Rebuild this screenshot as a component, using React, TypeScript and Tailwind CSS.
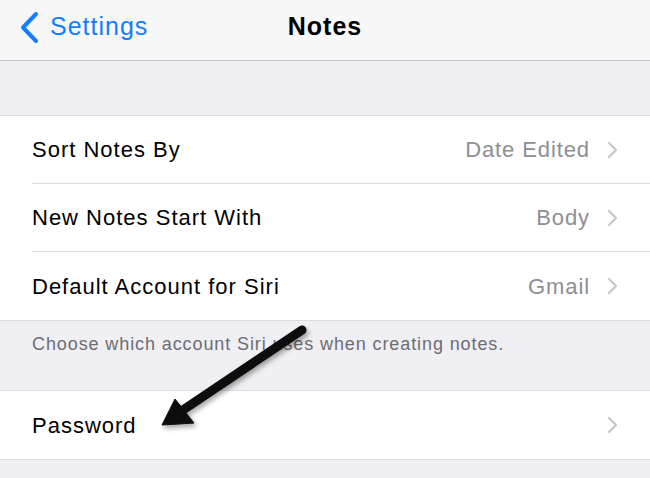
import React from "react"

const font = { fontFamily: '"Liberation Sans", Arial, sans-serif' }

function Chevron() {
    return (
        <svg width="11" height="18" viewBox="0 0 11 18" className="shrink-0">
            <path d="M2 2 L9 9 L2 16" fill="none" stroke="#c7c7cc" strokeWidth="2.2" strokeLinecap="round" strokeLinejoin="round" />
        </svg>
    )
}

function Row({ label, value, last }: { label: string; value?: string; last?: boolean }) {
    return (
        <div className="h-[68px] pl-8 flex items-stretch">
            <div className={`flex-1 flex items-center pr-8 ${last ? "" : "border-b border-[#dcdce0]"}`}>
                <span className="flex-1 text-[22px] tracking-[1px] text-black">{label}</span>
                {value && <span className="text-[22px] tracking-[0.9px] text-[#8e8e93] mr-[17px]">{value}</span>}
                <Chevron />
            </div>
        </div>
    )
}

export default function App() {
    return (
        <div className="relative w-[650px] h-[478px] overflow-hidden bg-[#efeff4]" style={font}>
            <div className="h-[61px] bg-[#f7f7f8] border-b border-[#c8c7cc] flex items-center relative pb-[6px]">
                <div className="flex items-center pl-[19px] gap-[10px]">
                    <svg width="21" height="33" viewBox="0 0 21 33">
                        <path d="M17 3 L4 16.5 L17 30" fill="none" stroke="#147efb" strokeWidth="4" strokeLinecap="round" strokeLinejoin="round" />
                    </svg>
                    <span className="text-[25px] tracking-[1px] text-[#147efb]">Settings</span>
                </div>
                <span className="absolute left-1/2 top-[8px] -translate-x-1/2 text-[25px] tracking-[1px] font-bold text-black">Notes</span>
            </div>
            <div className="h-[54px]" />
            <div className="bg-white border-y border-[#dcdce0]">
                <Row label="Sort Notes By" value="Date Edited" />
                <Row label="New Notes Start With" value="Body" />
                <Row label="Default Account for Siri" value="Gmail" last />
            </div>
            <div className="h-[69px] pl-8 pt-[10px] text-[18px] tracking-[0.9px] text-[#6d6d72]">
                Choose which account Siri uses when creating notes.
            </div>
            <div className="bg-white border-y border-[#dcdce0]">
                <Row label="Password" last />
            </div>

            <svg className="absolute inset-0 pointer-events-none" width="650" height="478" viewBox="0 0 650 478">
                <defs>
                    <filter id="sh" x="-20%" y="-20%" width="140%" height="140%">
                        <feDropShadow dx="2" dy="3" stdDeviation="2.5" floodColor="#000" floodOpacity="0.35" />
                    </filter>
                </defs>
                <g filter="url(#sh)" fill="#0a0a0a" stroke="#0a0a0a">
                    <line x1="302" y1="330" x2="180" y2="412" strokeWidth="9" strokeLinecap="round" />
                    <polygon points="162,425 175,399 194,423" strokeWidth="1" strokeLinejoin="round" />
                </g>
            </svg>
        </div>
    )
}
